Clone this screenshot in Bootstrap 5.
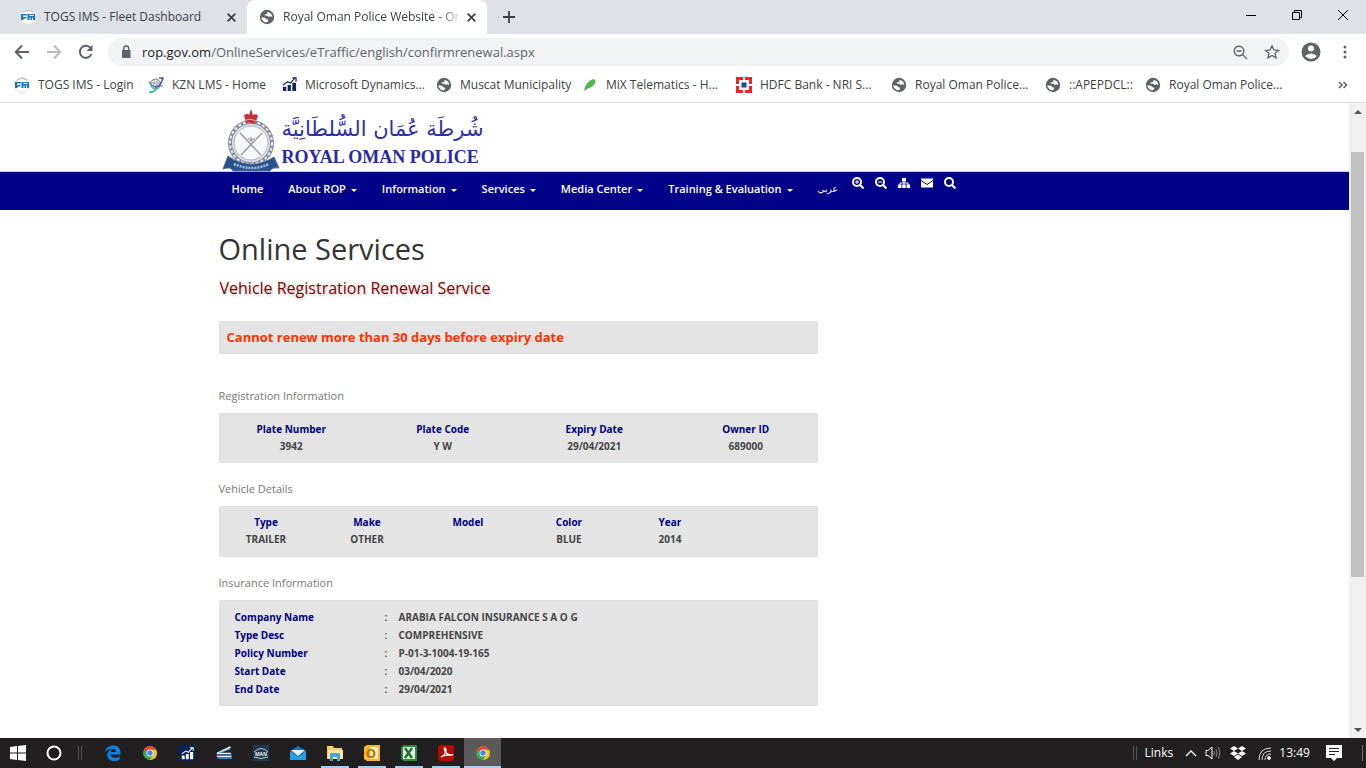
<!DOCTYPE html>
<html lang="en">
<head>
<meta charset="utf-8">
<meta name="viewport" content="width=device-width, initial-scale=1">
<title>Royal Oman Police Website - Online Services</title>
<link href="https://cdn.jsdelivr.net/npm/bootstrap@5.3.0/dist/css/bootstrap.min.css" rel="stylesheet">
<script src="https://cdn.jsdelivr.net/npm/bootstrap@5.3.0/dist/js/bootstrap.bundle.min.js" defer></script>
<style>
body{font-family:"Open Sans","DejaVu Sans",sans-serif;font-size:12px;line-height:16px;color:#3c4043;background:#fff}
button{border:0;background:none;padding:0;color:inherit;display:flex;align-items:center;justify-content:center;flex:none}
a{color:inherit;text-decoration:none}
svg{display:block;flex:none}
/* browser frame */
.tabstrip{height:34px;background:#dee1e6}
.tab-item{width:240px;padding:0 10px 0 12px;gap:8px}
.tab-first{width:247px;padding-left:20px}
.tab-active{background:#fff;border-radius:8px 8px 0 0}
.tab-title{flex:1;min-width:0;white-space:nowrap}
.tab-active .tab-title{-webkit-mask-image:linear-gradient(90deg,#000 90%,#0003);mask-image:linear-gradient(90deg,#000 90%,#0003)}
.tab-plus{width:44px}
.win-btn{width:46px;height:29px;color:#000}
.toolbar{height:36px;padding:0 17px 0 12px;color:#5f6368}
.nav-btn{width:20px;margin-right:12px}
.address{height:28px;border-radius:14px;background:#f1f3f4;font-size:13px;padding:0 9px 0 12px;min-width:0}
.address input{border:0;background:none;padding:0;outline:0;color:#5f6368;min-width:0}
.address label{color:#202124}
.bookmarks{height:33px;border-bottom:1px solid #d9dadc;padding:0 18px 3px 14px}
.bm-grid{display:grid;grid-template-columns:134px 134px 154px 147px 153px 155px 154px 100px 1fr;flex:1}
.bm-grid a{display:flex;align-items:center;gap:8px;white-space:nowrap}
/* site */
.site-area{flex:1;min-height:0;overflow:hidden}
.site-page{min-width:0;overflow:hidden}
.site-box{max-width:936px}
.brand{height:68px;padding-top:5px}
.brand-ar{font-family:"DejaVu Sans",sans-serif;font-size:21px;line-height:38px;padding-top:2px;color:#2f2db0;white-space:nowrap}
.brand-en{font-family:"Liberation Serif",serif;font-weight:700;font-size:18px;line-height:18px;color:#2a2aa8;white-space:nowrap}
.site-nav{background:#000288;border-top:1px solid #c5c7df;height:39px;color:#fff;font-size:11px;font-weight:600}
.menu{gap:25px;padding:9px 14px 0 13px;white-space:nowrap}
.menu a{display:flex;align-items:center;gap:5px}
.menu a.has-sub::after{content:"";border:3px solid transparent;border-top-color:#fff;border-bottom:0;margin-top:2px}
.menu .lang-link{font-size:9px;font-weight:400}
.tools{gap:11px;padding-top:5px}
.page-title{font-size:29px;line-height:40px;color:#333;margin:19px 0 0}
.page-sub{font-size:16px;line-height:24px;color:#800000;text-shadow:1px 2px 2px #ccc;margin:7px 0 21px 1px}
.panel-box{background:#e4e4e4;border:1px solid #dedede;border-radius:2px}
.warn{color:#f30;font-weight:700;font-size:13px;line-height:17px;padding:7px;margin-bottom:34px}
.sec-label{font-size:11px;line-height:16px;color:#777;font-weight:400;margin:0 0 9px}
.panel-box.data-box{padding:7px 0;margin-bottom:18px}
.panel-box.vehicle-box{padding-bottom:8px}
.data-box table{table-layout:fixed;width:calc(100% + 8px);margin:0 -4px;text-align:center;font-size:10px;line-height:17px}
.data-box th,.info-box th{color:#00007f;font-weight:700;padding:0}
.data-box td,.info-box td{color:#444;font-weight:700;padding:0}
.info-box{padding:7px 15px}
.info-box table{font-size:10px;line-height:18px}
.info-box th{width:150px}
.info-box td:nth-child(2){width:14px;font-weight:600}
/* scrollbar */
.sbar{width:17px;background:#f1f1f1;flex:none}
.sbar-btn{height:17px;width:17px}
.sbar-gap{flex:0 0 5%}
.sbar-thumb{flex:0 0 67%;background:#c1c1c1;margin:0 2px}
/* taskbar */
.taskbar{height:30px;background:#211f1f;color:#fff}
.task{width:37px;height:30px}
.task-sys{width:36px;height:30px}
.task.open{background:linear-gradient(#a3cdf3,#a3cdf3) center bottom/28px 2px no-repeat}
.task.current{background:linear-gradient(#a3cdf3,#a3cdf3) center bottom/100% 2px no-repeat #5b5a59}
.grip{width:4px;height:14px;border:1px solid #555;border-width:0 1px}
.grip-start{margin:0 12px 0 6px}
.notice{margin-right:20px}
</style>
</head>
<body>
<svg width="0" height="0" class="position-absolute" aria-hidden="true">
<symbol id="globe" viewBox="0 0 16 16"><circle cx="8" cy="8" r="7.2" fill="#5f6368"/><path d="M8.800 2.800 12 4.500 13.500 7.500l-1.500.3-1-.8-1 1.300-1.500-1.500H6L5.500 5.500 8 5zM2.300 8.300l3.700.5 1.500 1.500 1.800.5-.3 1.200-1.500 1.500C5 13.300 2.600 11 2.300 8.300z" fill="#fff"/></symbol>
<symbol id="togs" viewBox="0 0 16 16"><circle cx="8" cy="8" r="7.500" fill="#fff" stroke="#e2e2e2"/><path d="M2.500 3.500Q8-.5 13.500 3.500" fill="none" stroke="#b5b5b5"/><path d="M1 5h6v1.500H3V8h3.500v1.500H3.500V11H1zM7.500 5H15v6h-2V8.500h-1V11h-1.500V8.500h-1V11h-2z" fill="#1977b8"/><path d="M9.500 6.500h4" stroke="#fff"/></symbol>
<symbol id="bars" viewBox="0 0 16 16"><path d="M1 10.500h3.500V15H1zm5-2h3.500V15H6zm5-2.500h4v9h-4z" fill="currentColor"/><path d="M1 8.500 6 5l3 1.500L14 1M11 1h4v4" fill="none" stroke="currentColor" stroke-width="1.300"/></symbol>
<symbol id="chrome" viewBox="0 0 16 16"><circle cx="8" cy="8" r="7" fill="#34a853"/><path d="M8 8 1.900 4.500A7 7 0 0 1 14.100 4.500L8 5z" fill="#ea4335"/><path d="M8 4.800h6.200A7 7 0 0 1 8 15l3-5z" fill="#fbc116"/><circle cx="8" cy="8" r="3.500" fill="#fff"/><circle cx="8" cy="8" r="2.700" fill="#4285f4"/></symbol>
<symbol id="cross" viewBox="0 0 10 10"><path d="m1.500 1.500 7 7m0-7-7 7" stroke="#3c4043" stroke-width="1.600"/></symbol>
</svg>
<div class="d-flex flex-column vh-100 overflow-hidden">
<header>
 <div class="tabstrip d-flex">
  <div class="tab-item tab-first d-flex align-items-center"><svg width="16" height="16"><use href="#togs"/></svg><span class="tab-title">TOGS IMS - Fleet Dashboard</span><button aria-label="Close tab"><svg width="11" height="11"><use href="#cross"/></svg></button></div>
  <div class="tab-item tab-active d-flex align-items-center"><svg width="16" height="16"><use href="#globe"/></svg><span class="tab-title">Royal Oman Police Website - Onl</span><button aria-label="Close tab"><svg width="11" height="11"><use href="#cross"/></svg></button></div>
  <button class="tab-plus" aria-label="New tab"><svg width="12" height="12" viewBox="0 0 12 12"><path d="M6 0v12M0 6h12" stroke="#3c4043" stroke-width="1.800"/></svg></button>
  <div class="ms-auto d-flex">
   <button class="win-btn" aria-label="Minimize"><svg width="10" height="10"><path d="M0 5.500h10" stroke="#000"/></svg></button>
   <button class="win-btn" aria-label="Restore"><svg width="10" height="10" fill="none" stroke="#000"><path d="M.5 2.500h7v7h-7zM2.500 2.500v-2h7v7h-2"/></svg></button>
   <button class="win-btn" aria-label="Close"><svg width="10" height="10"><path d="m0 0 10 10M10 0 0 10" stroke="#000"/></svg></button>
  </div>
 </div>
 <div class="toolbar d-flex align-items-center">
  <button class="nav-btn" aria-label="Back"><svg width="16" height="16" fill="none" stroke="#5f6368" stroke-width="2"><path d="M15 8H2M8 1.500 1.800 8 8 14.500"/></svg></button>
  <button class="nav-btn" aria-label="Forward"><svg width="16" height="16" fill="none" stroke="#babcbe" stroke-width="2"><path d="M1 8h13M8 1.500 14.200 8 8 14.500"/></svg></button>
  <button class="nav-btn" aria-label="Reload"><svg width="16" height="16" fill="none" stroke="#5f6368" stroke-width="2"><path d="M13.500 10A6 6 0 1 1 12.500 4"/><path d="M14.500 1v6h-6z" fill="#5f6368" stroke="none"/></svg></button>
  <div class="address d-flex align-items-center flex-fill">
   <svg class="me-2" width="14" height="14" viewBox="0 0 14 14"><path d="M2 5h8.500v8H2z" fill="#5f6368"/><path d="M3.800 5V3.500a2.400 2.400 0 0 1 4.900 0V5" fill="none" stroke="#5f6368" stroke-width="1.400"/></svg>
   <label for="url">rop.gov.om</label><input id="url" class="flex-fill" type="text" value="/OnlineServices/eTraffic/english/confirmrenewal.aspx">
   <button aria-label="Zoom" class="me-3"><svg width="15" height="15" fill="none" stroke="#5f6368" stroke-width="1.400"><circle cx="6" cy="6" r="4.800"/><path d="m9.500 9.500 4.500 4.500M3.500 6h5"/></svg></button>
   <button aria-label="Bookmark"><svg width="16" height="16" viewBox="0 0 16 16"><path d="m8 1.800 1.900 4.200 4.600.4-3.500 3 1.100 4.500L8 11.500l-4.100 2.400L5 9.400l-3.500-3L6.100 6z" fill="none" stroke="#5f6368" stroke-width="1.300"/></svg></button>
  </div>
  <button aria-label="Profile" class="ms-2 me-3 ps-1"><svg width="20" height="20" viewBox="0 0 20 20"><circle cx="10" cy="10" r="9.500" fill="#5f6368"/><circle cx="10" cy="6.500" r="3" fill="#fff"/><path d="M4 14q6-5 12 0-6 6-12 0z" fill="#fff"/></svg></button>
  <button aria-label="Menu" class="ms-1"><svg width="8" height="16" fill="#5f6368"><circle cx="4" cy="3" r="1.500"/><circle cx="4" cy="8" r="1.500"/><circle cx="4" cy="13" r="1.500"/></svg></button>
 </div>
 <div class="bookmarks d-flex align-items-center">
  <nav class="bm-grid" aria-label="Bookmarks">
   <a href="#"><svg width="16" height="16"><use href="#togs"/></svg>TOGS IMS - Login</a>
   <a href="#"><svg width="16" height="16" fill="none" viewBox="0 0 16 16"><circle cx="7.500" cy="7" r="5" fill="#eee" stroke="#777"/><path d="M3 6h9M3 9h8M6 2v10M9 2v10" stroke="#888" stroke-width=".7"/><path d="M1 5c5 7 9 6 14 3" stroke="#38a8d8" stroke-width="1.300"/><path d="M11 1h4q-3 10-8 9" stroke="#69489a" stroke-width="1.500"/><path d="M1 15c3 1 6-1 9-5" stroke="#35bd91" stroke-width="1.800"/></svg>KZN LMS - Home</a>
   <a href="#"><svg width="15" height="15" color="#0b2657"><use href="#bars"/></svg>Microsoft Dynamics...</a>
   <a href="#"><svg width="16" height="16"><use href="#globe"/></svg>Muscat Municipality</a>
   <a href="#"><svg width="15" height="16"><path d="M1 14Q2 7 7 3.500 12 1 12.500 4C12 10 5 11 1 14z" fill="#4fb848"/></svg>MiX Telematics - H...</a>
   <a href="#"><svg width="16" height="16"><path d="M0 0h16v16H0z" fill="#ed232a"/><path d="M3 3h10v10H3zM7 0h2v16H7zM0 7h16v2H0z" fill="#fff"/><path d="M5.500 5.500h5v5h-5z" fill="#164b91"/></svg>HDFC Bank - NRI S...</a>
   <a href="#"><svg width="16" height="16"><use href="#globe"/></svg>Royal Oman Police...</a>
   <a href="#"><svg width="16" height="16"><use href="#globe"/></svg>::APEPDCL::</a>
   <a href="#"><svg width="16" height="16"><use href="#globe"/></svg>Royal Oman Police...</a>
  </nav>
  <button aria-label="More bookmarks"><svg width="10" height="8" fill="none" stroke="#5f6368" stroke-width="1.600"><path d="m1 1 3 3-3 3M5.500 1l3 3-3 3"/></svg></button>
 </div>
</header>

<div class="site-area d-flex">
 <div class="site-page flex-fill">
  <div class="container site-box">
   <div class="brand d-flex">
    <svg width="63" height="64" viewBox="0 0 63 64"><circle cx="32" cy="35" r="21" fill="#e2e4ea" stroke="#858a98" stroke-width="4"/><circle cx="32" cy="35" r="21" fill="none" stroke="#e8eaf0" stroke-width="2" stroke-dasharray="3 2"/><circle cx="32" cy="35" r="17" fill="#f8f8fa" stroke="#a9aeb9"/><path d="m21 25 21 22m1-22L22 47m10-18v5m-3-4q3 5 6 0" stroke="#92959d" stroke-width="1.300" fill="none"/><path d="m27 15-2-8q4-2 5 0l2-6 2 6q4-2 5 1l-3 8q-4-2-9-1z" fill="#c5323c"/><path d="M27 12q5-2 10 1" stroke="#eaa" fill="none"/><path d="M9 48q22 16 46 1l5 11q-7-1-9 3H14q-2-5-10-2z" fill="#28528f" stroke="#53719b"/><path d="M15 56q18 8 35 0" fill="none" stroke="#a9c0d5" stroke-width="2.500" stroke-dasharray="2 1"/></svg>
    <div class="d-flex flex-column align-items-start">
     <span class="brand-ar" lang="ar" dir="rtl">شُرطَة عُمَان السُّلطَانِيَّة</span>
     <span class="brand-en">ROYAL OMAN POLICE</span>
    </div>
   </div>
  </div>
  <div class="site-nav">
   <div class="container site-box d-flex">
    <nav class="menu d-flex"><a href="#">Home</a><a href="#" class="has-sub">About ROP</a><a href="#" class="has-sub">Information</a><a href="#" class="has-sub">Services</a><a href="#" class="has-sub">Media Center</a><a href="#" class="has-sub">Training &amp; Evaluation</a><a href="#" class="lang-link" lang="ar">عربي</a></nav>
    <div class="tools d-flex">
     <a href="#" aria-label="Zoom in"><svg width="12" height="12" fill="none" stroke="#fff" stroke-width="2"><circle cx="5" cy="5" r="4"/><path d="m8 8 3.500 3.500"/><path d="M3 5h4M5 3v4" stroke-width="1"/></svg></a>
     <a href="#" aria-label="Zoom out"><svg width="12" height="12" fill="none" stroke="#fff" stroke-width="2"><circle cx="5" cy="5" r="4"/><path d="m8 8 3.500 3.500"/><path d="M3 5h4" stroke-width="1"/></svg></a>
     <a href="#" aria-label="Sitemap"><svg width="12" height="12" fill="#fff"><path d="M4 1h4v3.500H4zM0 7.500h3.500V11H0zm4.200 0h3.500V11H4.200zm4.300 0H12V11H8.500z"/><path d="M6 4v4M2 8V6h8v2" fill="none" stroke="#fff"/></svg></a>
     <a href="#" aria-label="Mail"><svg width="12" height="12"><path d="M0 1.500h12v9H0z" fill="#fff"/><path d="m0 3.500 6 4 6-4" fill="none" stroke="#000288"/></svg></a>
     <a href="#" aria-label="Search"><svg width="12" height="12" fill="none" stroke="#fff" stroke-width="2"><circle cx="5" cy="5" r="4"/><path d="m8 8 3.500 3.500"/></svg></a>
    </div>
   </div>
  </div>
  <main class="container site-box"><div class="row"><div class="col-8">
   <h1 class="page-title">Online Services</h1>
   <h2 class="page-sub">Vehicle Registration Renewal Service</h2>
   <div class="panel-box warn">Cannot renew more than 30 days before expiry date</div>
   <h3 class="sec-label">Registration Information</h3>
   <div class="panel-box data-box"><table><thead><tr><th>Plate Number</th><th>Plate Code</th><th>Expiry Date</th><th>Owner ID</th></tr></thead><tbody><tr><td>3942</td><td>Y W</td><td>29/04/2021</td><td>689000</td></tr></tbody></table></div>
   <h3 class="sec-label">Vehicle Details</h3>
   <div class="panel-box data-box vehicle-box"><table><thead><tr><th>Type</th><th>Make</th><th>Model</th><th>Color</th><th>Year</th><th></th></tr></thead><tbody><tr><td>TRAILER</td><td>OTHER</td><td></td><td>BLUE</td><td>2014</td><td></td></tr></tbody></table></div>
   <h3 class="sec-label">Insurance Information</h3>
   <div class="panel-box info-box"><table><tbody>
    <tr><th scope="row">Company Name</th><td>:</td><td>ARABIA FALCON INSURANCE S A O G</td></tr>
    <tr><th scope="row">Type Desc</th><td>:</td><td>COMPREHENSIVE</td></tr>
    <tr><th scope="row">Policy Number</th><td>:</td><td>P-01-3-1004-19-165</td></tr>
    <tr><th scope="row">Start Date</th><td>:</td><td>03/04/2020</td></tr>
    <tr><th scope="row">End Date</th><td>:</td><td>29/04/2021</td></tr>
   </tbody></table></div>
  </div></div></main>
 </div>
 <div class="sbar d-flex flex-column">
  <button class="sbar-btn" aria-label="Scroll up"><svg width="8" height="4"><path d="m4 0 4 4H0z" fill="#505050"/></svg></button>
  <div class="sbar-gap"></div><div class="sbar-thumb"></div>
  <button class="sbar-btn mt-auto" aria-label="Scroll down"><svg width="8" height="4"><path d="m0 0 4 4 4-4z" fill="#505050"/></svg></button>
 </div>
</div>

<footer class="taskbar d-flex align-items-center">
 <button class="task-sys" aria-label="Start"><svg width="16" height="16" fill="#fff"><path d="m0 2 7-1v6.500H0zm8-1 8-1v7.500H8zM0 8.500h7V15l-7-1zm8 0h8V16l-8-1z"/></svg></button>
 <button class="task-sys" aria-label="Cortana"><svg width="16" height="16"><circle cx="8" cy="8" r="6.500" fill="none" stroke="#fff" stroke-width="2"/></svg></button>
 <span class="grip grip-start"></span>
 <button class="task" aria-label="Edge"><svg width="16" height="16"><path d="M0 7C1-1 15-2 15.500 7v2.500H5.500c.5 4 6 4 9 2V15C7 18 1 14 2.500 8.500 3 6 5 5 6.500 4 3.500 4 1.500 5 0 7zm5.500 0H11c0-4-5-4-5.500 0z" fill="#0f7fdf"/></svg></button>
 <button class="task" aria-label="Chrome"><svg width="16" height="16"><use href="#chrome"/></svg></button>
 <button class="task" aria-label="Dynamics"><svg width="16" height="16" color="#fff"><path d="M0 0h16v16H0z" fill="#06245a"/><use href="#bars" x="2" y="2" width="13" height="13"/></svg></button>
 <button class="task" aria-label="Scanner"><svg width="16" height="16" viewBox="0 0 16 16"><path d="M14.500 2 1 8.500h14" fill="none" stroke="#fff" stroke-width="1.500"/><path d="M0 9.500h16V14H2z" fill="#2187b8"/><path d="m3 8 11-4" stroke="#35b8dd"/><path d="M1 11.500h14" stroke="#fff"/></svg></button>
 <button class="task" aria-label="MAN"><svg width="16" height="16"><path d="M0 0h16v16H0z" fill="#21394f"/><path d="M1 7q7-7 14 0M1 12q7 3 14 0" fill="none" stroke="#bbc7d0"/><text x="8" y="11" text-anchor="middle" font-size="5" font-weight="700" fill="#eee">MAN</text></svg></button>
 <button class="task" aria-label="Mail"><svg width="16" height="16"><path d="m0 6 8-5 8 5v9H0z" fill="#1b71bb"/><path d="M1 5h14l-7 6z" fill="#eee"/><path d="m0 6 8 6 8-6v9H0z" fill="#27a1e5"/></svg></button>
 <button class="task open" aria-label="Files"><svg width="16" height="16"><path d="M0 1h6l1 2h8v11H0z" fill="#f7cf63"/><path d="M1 5h15v9H1z" fill="#ffe59b"/><path d="M3 9q0-1 1-1h8q1 0 1 1v7h-3v-4H6v4H3z" fill="#42a6df"/></svg></button>
 <button class="task open" aria-label="Outlook"><svg width="16" height="16"><path d="M0 2 3 0h13v16H3l-3-2z" fill="#f6b52c"/><path d="M6 2h8v12H6z" fill="#fff1bd"/><text x="7" y="13" text-anchor="middle" font-size="13" font-weight="700" fill="#b96d00">O</text></svg></button>
 <button class="task open" aria-label="Excel"><svg width="16" height="16"><path d="M0 2 3 0h13v16H3l-3-2z" fill="#338746"/><path d="M2 2h12v12H2z" fill="#e0efdc"/><path d="m4 3 7 10m0-10L4 13" stroke="#247238" stroke-width="2.500"/></svg></button>
 <button class="task open" aria-label="Acrobat"><svg width="16" height="16"><rect width="16" height="16" rx="2" fill="#b30b00"/><path d="M3 12c5-2 6-8 4-9s0 7 6 7-6-1-10 2z" fill="none" stroke="#fff" stroke-width="1.300"/></svg></button>
 <button class="task current" aria-label="Chrome, current"><svg width="16" height="16"><use href="#chrome"/></svg></button>
 <div class="ms-auto d-flex align-items-center">
  <span class="grip me-2"></span><span class="me-2 pe-1">Links</span>
  <button class="me-2" aria-label="Hidden icons"><svg width="12" height="8"><path d="m1 7 5-5 5 5" fill="none" stroke="#fff" stroke-width="1.300"/></svg></button>
  <button class="me-2" aria-label="Volume"><svg width="17" height="14" fill="none" stroke="#fff"><path d="M1 4.500h2l4-3.500v12L3 9.500H1z"/><path d="M9 5q1 2 0 4m2-6q2 4 0 8m2-10q3.500 6 0 12" stroke="#888"/></svg></button>
  <button class="me-2" aria-label="Dropbox"><svg width="16" height="14" fill="#fff"><path d="m4 0 4 2.500L4 5 0 2.500zm8 0 4 2.500L12 5 8 2.500zM4 5l4 2.500L4 10 0 7.500zm8 0 4 2.500-4 2.500-4-2.500zM8 8.500l4 2.500-4 3-4-3z"/></svg></button>
  <button class="me-2 ps-1" aria-label="Network"><svg width="13" height="13" fill="none" stroke="#ddd"><path d="M1 13Q1 1 13 1M4 13q0-9 9-9M7 13q0-6 6-6"/><circle cx="11" cy="11" r="1.500" fill="#fff"/></svg></button>
  <span class="me-3">13:49</span>
  <button class="notice" aria-label="Notifications"><svg width="16" height="16"><path d="M0 0h16v13h-5l-3 3-3-3H0z" fill="#fff"/><path d="M3 3.500h10M3 6.500h10M3 9.500h6" stroke="#222"/></svg></button>
  <span class="border-start border-secondary">&nbsp;</span>
 </div>
</footer>
</div>
</body>
</html>
